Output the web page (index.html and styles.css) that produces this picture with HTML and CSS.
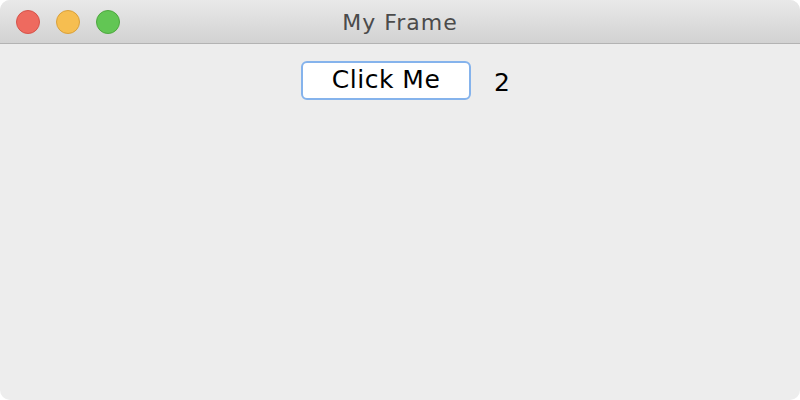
FILE: index.html
```html
<!DOCTYPE html>
<html>
<head>
<meta charset="utf-8">
<link rel="stylesheet" href="styles.css">
</head>
<body>
<div class="window">
  <div class="titlebar">
    <div class="lights">
      <span class="light red"></span>
      <span class="light yellow"></span>
      <span class="light green"></span>
    </div>
    <div class="title">My Frame</div>
  </div>
  <div class="content">
    <button class="btn">Click Me</button>
    <span class="count">2</span>
  </div>
</div>
</body>
</html>
```
FILE: styles.css
```css
html, body {
  margin: 0;
  padding: 0;
  background: #ffffff;
}
.window {
  width: 800px;
  height: 400px;
  border-radius: 10px;
  overflow: hidden;
  background: #ededed;
  display: flex;
  flex-direction: column;
  font-family: "DejaVu Sans", "Liberation Sans", sans-serif;
}
.titlebar {
  height: 43px;
  border-bottom: 1px solid #b3b3b3;
  background: linear-gradient(#e9e9e9, #d2d2d2);
  position: relative;
  display: flex;
  align-items: center;
  justify-content: center;
}
.lights {
  position: absolute;
  left: 16px;
  top: 10px;
  display: flex;
  gap: 16px;
}
.light {
  width: 22px;
  height: 22px;
  border-radius: 50%;
  display: block;
}
.red { background: #ee6a5f; border: 1px solid #d5534a; }
.yellow { background: #f6be50; border: 1px solid #d9a03b; }
.green { background: #62c654; border: 1px solid #4ea73f; }
.title {
  font-size: 22px;
  letter-spacing: 1px;
  color: #4b4b4b;
  margin-top: 1px;
}
.content {
  display: flex;
  justify-content: center;
  align-items: center;
  padding-top: 17px;
  padding-left: 11px;
  gap: 23px;
}
.btn {
  width: 170px;
  height: 39px;
  box-sizing: border-box;
  border: 2px solid #85b3ec;
  border-radius: 6px;
  background: #ffffff;
  font-family: "DejaVu Sans", "Liberation Sans", sans-serif;
  font-size: 25px;
  letter-spacing: 0.5px;
  color: #000;
  padding: 0 0 2px 0;
  margin: 0;
}
.count {
  font-size: 25px;
  color: #000;
  margin-top: 4px;
}
```
